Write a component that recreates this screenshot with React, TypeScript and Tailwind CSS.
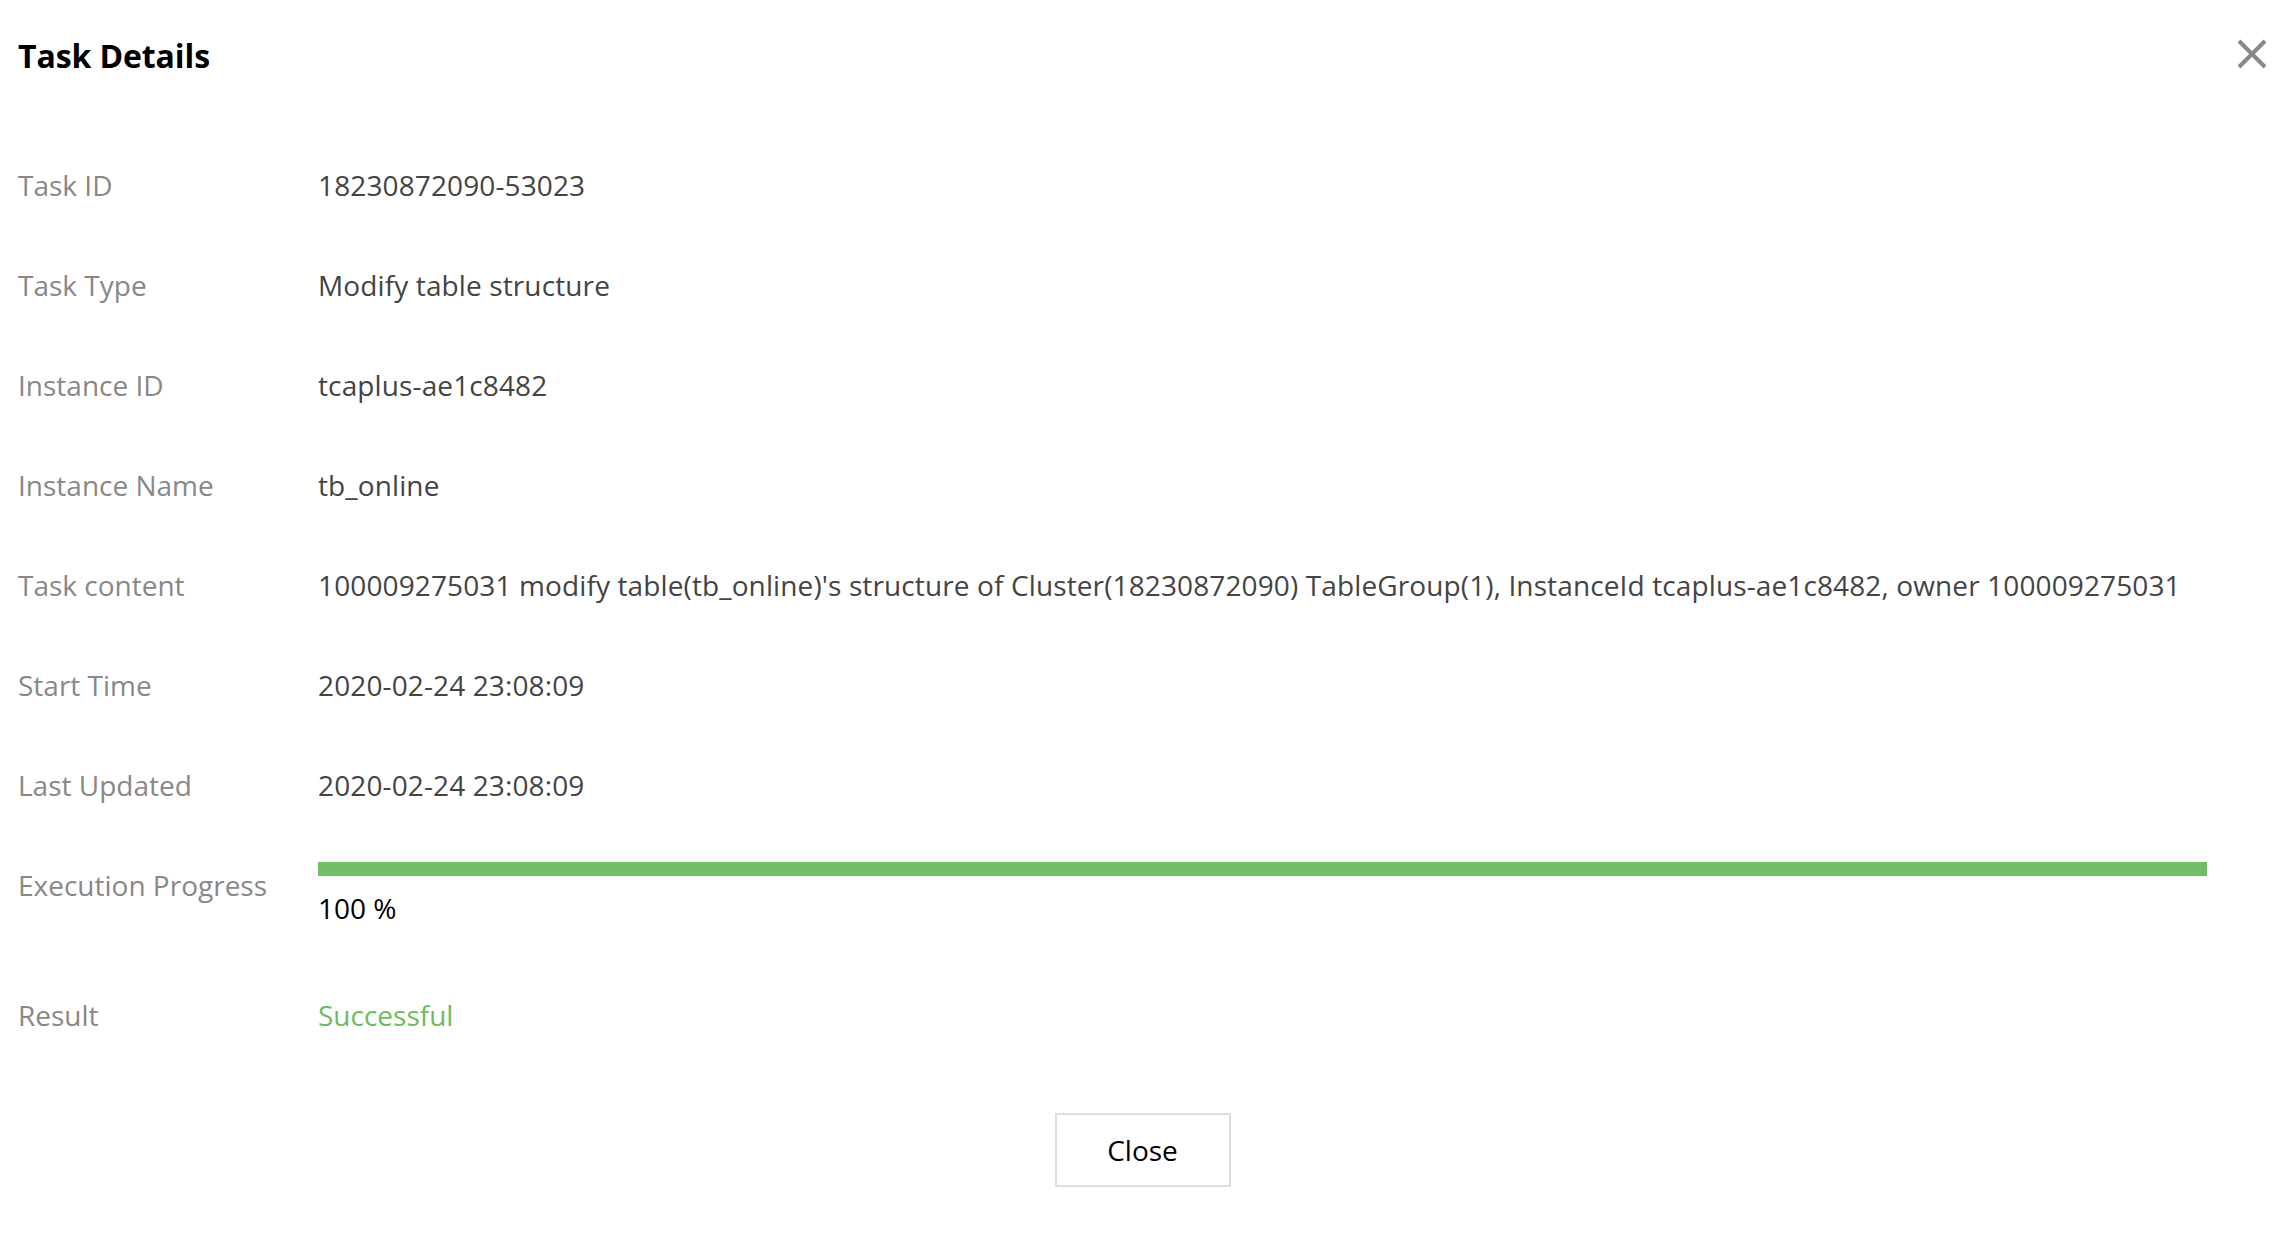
import React from 'react'

const rows = [
  { label: 'Task ID', value: '18230872090-53023' },
  { label: 'Task Type', value: 'Modify table structure' },
  { label: 'Instance ID', value: 'tcaplus-ae1c8482' },
  { label: 'Instance Name', value: 'tb_online' },
  {
    label: 'Task content',
    value:
      "100009275031 modify table(tb_online)'s structure of Cluster(18230872090) TableGroup(1), InstanceId tcaplus-ae1c8482, owner 100009275031",
  },
  { label: 'Start Time', value: '2020-02-24 23:08:09' },
  { label: 'Last Updated', value: '2020-02-24 23:08:09' },
]

function CloseIcon() {
  return (
    <svg width="30" height="30" viewBox="0 0 30 30" className="block">
      <path d="M2 2 L28 28 M28 2 L2 28" stroke="#888888" strokeWidth="4" />
    </svg>
  )
}

export default function App() {
  const progress = 100
  return (
    <div
      className="w-[2285px] h-[1236px] bg-white pl-[18px] pr-[18px] text-[28px]"
      style={{ fontFamily: '"Open Sans", "Noto Sans", sans-serif' }}
    >
      <div className="h-[112px] flex items-center justify-between">
        <h1 className="text-[32px] font-bold text-black tracking-[-0.1px]">Task Details</h1>
        <button className="mb-[4px]">
          <CloseIcon />
        </button>
      </div>

      <div className="mt-[23px] mr-[60px]">
        {rows.map((row) => (
          <div key={row.label} className="h-[100px] flex items-center">
            <div className="w-[300px] shrink-0 text-[#888888]">{row.label}</div>
            <div className="whitespace-nowrap text-[#444444] tracking-[0.12px]">{row.value}</div>
          </div>
        ))}

        <div className="h-[130px] flex items-start">
          <div className="w-[300px] shrink-0 h-[100px] flex items-center text-[#888888]">
            Execution Progress
          </div>
          <div className="flex-1 pt-[27px]">
            <div className="h-[14px] bg-[#f0f0f0]">
              <div className="h-full bg-[#70bf62]" style={{ width: `${progress}%` }} />
            </div>
            <div className="mt-[11px] text-black">{progress} %</div>
          </div>
        </div>

        <div className="h-[100px] flex items-center">
          <div className="w-[300px] shrink-0 text-[#888888]">Result</div>
          <div className="text-[#6cbd5c]">Successful</div>
        </div>
      </div>

      <div className="mt-[48px] flex justify-center">
        <button className="w-[176px] h-[74px] border-2 border-[#dddddd] text-black text-[28px]">
          Close
        </button>
      </div>
    </div>
  )
}
